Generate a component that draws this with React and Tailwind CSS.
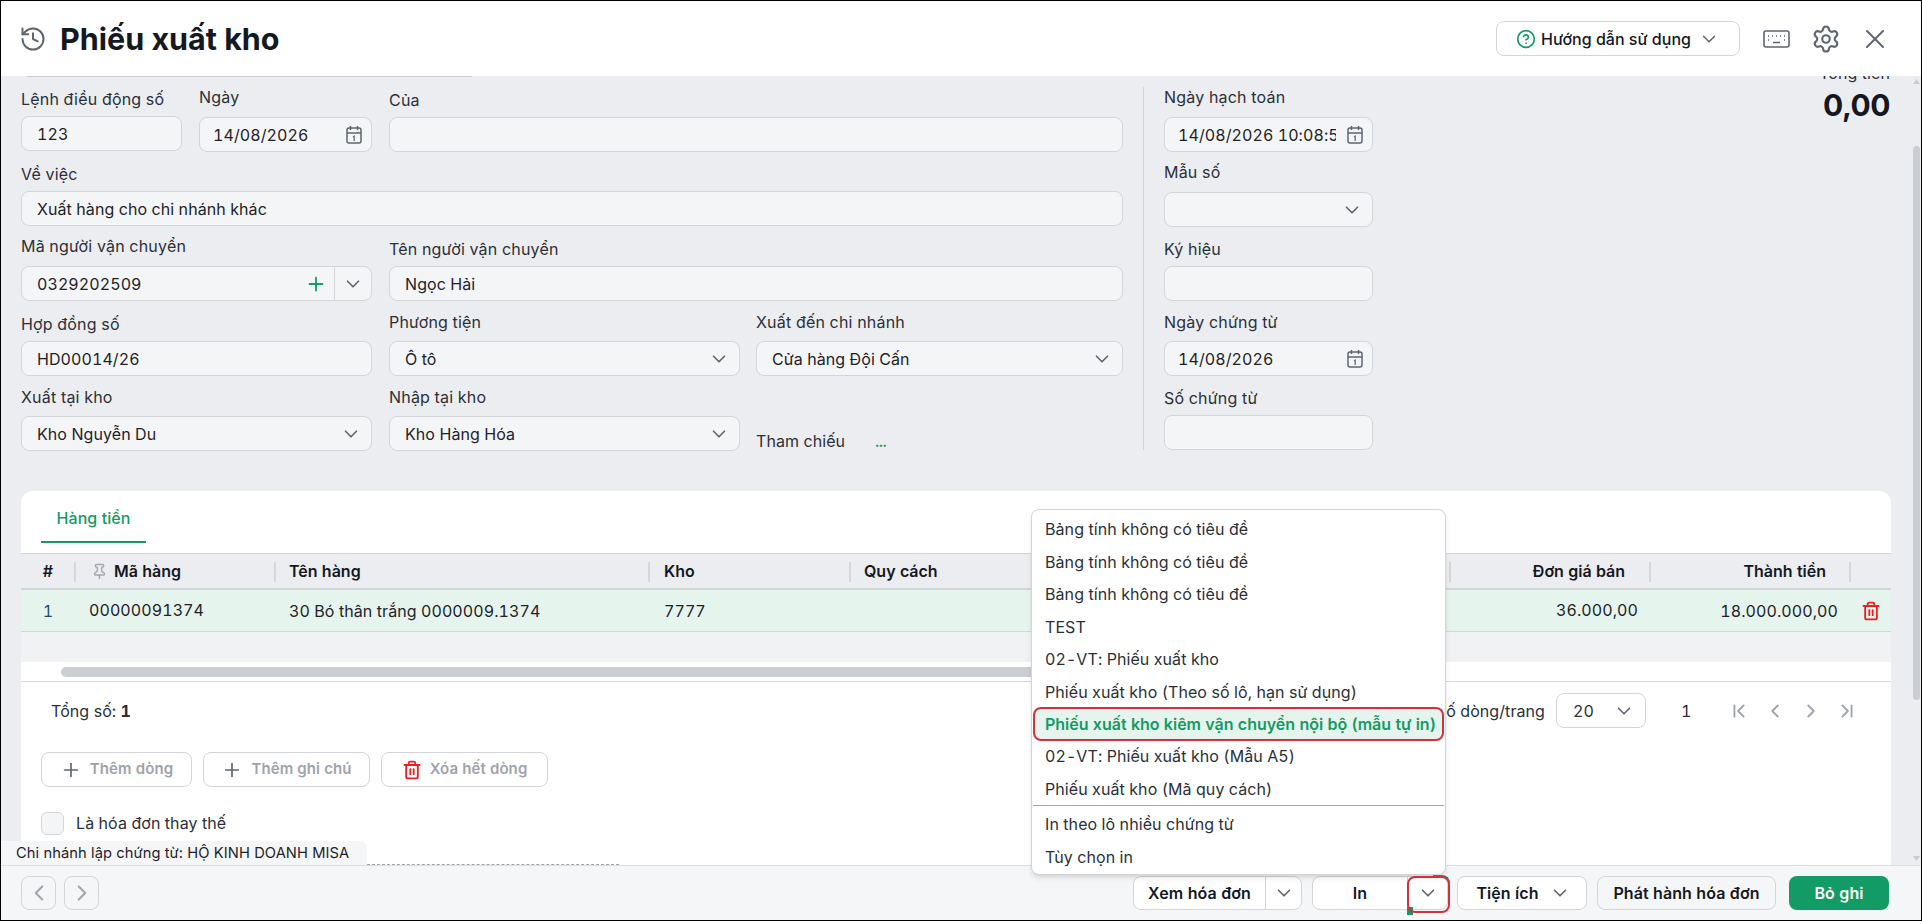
import {
  ChevronDown,
  ChevronFirst,
  ChevronLast,
  ChevronLeft,
  ChevronRight,
  CircleHelp,
  History,
  Pin,
  Plus,
  Settings,
  Trash2,
  X,
} from 'lucide-react';

const menuItems = [
  'Bảng tính không có tiêu đề',
  'Bảng tính không có tiêu đề',
  'Bảng tính không có tiêu đề',
  'TEST',
  '02-VT: Phiếu xuất kho',
  'Phiếu xuất kho (Theo số lô, hạn sử dụng)',
  'Phiếu xuất kho kiêm vận chuyển nội bộ (mẫu tự in)',
  '02-VT: Phiếu xuất kho (Mẫu A5)',
  'Phiếu xuất kho (Mã quy cách)',
];

const inputBox =
  'h-[35px] rounded-lg border border-[#d3d5d9] bg-[#f4f5f6] flex items-center text-[16px] text-[#1f2329]';

function CalendarIcon() {
  return (
    <svg width="16" height="18" viewBox="0 0 16 18" fill="none" stroke="#5f6570" strokeWidth="1.5" className="shrink-0">
      <rect x="1" y="2" width="14" height="15" rx="2" />
      <path d="M1 7h14M4.5 0v4M11.5 0v4" />
      <path d="M7 11l1.2-.8v4.8" strokeWidth="1.2" />
    </svg>
  );
}

function KeyboardIcon() {
  return (
    <svg width="27" height="18" viewBox="0 0 27 18" fill="none" stroke="#5f6570" className="shrink-0">
      <rect x="1" y="1" width="25" height="16" rx="2" strokeWidth="1.6" />
      <path d="M5 6h1M9 6h1M13 6h1M17 6h1M21 6h1M5 10h1M21 10h1M10 12.5h7" strokeWidth="1.5" />
    </svg>
  );
}

function Label({ children, gap }) {
  return <div className={`h-5 leading-5 text-[16px] tracking-[0.2px] text-[#2b3038] whitespace-nowrap ${gap}`}>{children}</div>;
}

function TextField({ label, value, gap, width, icon, pad = 'px-[15px]' }) {
  return (
    <div className={width}>
      <Label gap={gap}>{label}</Label>
      <div className={`${inputBox} ${pad} justify-between`}>
        <span className="overflow-hidden whitespace-nowrap">{value}</span>
        {icon}
      </div>
    </div>
  );
}

function SelectField({ label, value, gap, width }) {
  return (
    <TextField
      label={label}
      value={value}
      gap={gap}
      width={width}
      pad="pl-[15px] pr-[9px]"
      icon={<ChevronDown size={22} color="#5f6570" strokeWidth={1.8} className="shrink-0" />}
    />
  );
}

function FooterButton({ children, className }) {
  return (
    <div className={`h-[34px] flex items-center justify-center rounded-lg border border-[#d3d5d9] text-[16px] font-semibold text-[#14181f] ${className}`}>
      {children}
    </div>
  );
}

function AddButton({ icon, children, width }) {
  return (
    <div className={`h-[35px] ${width} rounded-lg border border-[#d3d5d9] flex items-center justify-center gap-[8px] text-[15px] font-semibold text-[#9ea3ab]`}>
      {icon}
      {children}
    </div>
  );
}

function HeadCell({ width, align = 'justify-start', children, divider = true }) {
  return (
    <div className={`${width} h-full flex items-center ${align} relative`}>
      {children}
      {divider && <div className="absolute -right-px top-[8px] h-[20px] w-[2px] bg-[#d5d7db]" />}
    </div>
  );
}

export default function App() {
  return (
    <div className="relative w-[1922px] h-[921px] overflow-hidden border border-black bg-white flex flex-col font-[Inter,sans-serif] tabular-nums tracking-[0.08px]">
      {/* Header */}
      <header className="h-[75px] shrink-0 flex items-center bg-white pl-[18px] pr-[30px]">
        <History size={28} color="#5f6570" strokeWidth={1.7} />
        <h1 className="ml-[13px] text-[30.5px] font-bold text-[#14181f] tracking-normal normal-nums">Phiếu xuất kho</h1>
        <div className="ml-auto flex items-center">
          <div className="w-[244px] h-[35px] rounded-lg border border-[#d3d5d9] flex items-center justify-center gap-[5px] text-[16px] font-medium text-[#14181f] tracking-normal">
            <CircleHelp size={20} color="#129b65" strokeWidth={2} />
            Hướng dẫn sử dụng
            <ChevronDown size={22} color="#5f6570" strokeWidth={1.6} className="ml-[2px]" />
          </div>
          <div className="ml-[23px]"><KeyboardIcon /></div>
          <Settings size={30} color="#5f6570" strokeWidth={1.7} className="ml-[21px]" />
          <X size={32} color="#5f6570" strokeWidth={1.5} className="ml-[18px]" />
        </div>
      </header>

      {/* Body */}
      <main className="relative flex-1 min-h-0 flex bg-[#ecedf0] overflow-hidden">
        <div className="w-[1890px] shrink-0 flex flex-col pl-[20px]">
          <div className="flex h-[415px] shrink-0">
            {/* Left form */}
            <div className="w-[1102px] shrink-0 flex flex-col">
              <div className="h-px w-[445px] ml-[6px] bg-[#c9ccd1]" />
              <div className="h-[75px] flex items-end gap-[17px]">
                <TextField label="Lệnh điều động số" value="123" gap="mb-[7px]" width="w-[161px] -translate-y-px" />
                <TextField label="Ngày" value="14/08/2026" gap="mb-[10px]" width="w-[173px]" pad="pl-[13px] pr-[9px]" icon={<CalendarIcon />} />
                <TextField label="Của" value="" gap="mb-[7px]" width="w-[734px]" />
              </div>
              <div className="h-[74px] flex items-end">
                <TextField label="Về việc" value="Xuất hàng cho chi nhánh khác" gap="mb-[7px]" width="w-full" />
              </div>
              <div className="h-[75px] flex items-end gap-[17px]">
                <div className="w-[351px]">
                  <Label gap="mb-[10px]">Mã người vận chuyển</Label>
                  <div className={`${inputBox} pl-[15px]`}>
                    <span className="flex-1">0329202509</span>
                    <Plus size={22} color="#129b65" strokeWidth={2} className="mr-[7px]" />
                    <div className="w-[37px] h-full border-l border-[#d3d5d9] flex items-center justify-center">
                      <ChevronDown size={22} color="#5f6570" strokeWidth={1.8} />
                    </div>
                  </div>
                </div>
                <TextField label="Tên người vận chuyển" value="Ngọc Hải" gap="mb-[7px]" width="flex-1" />
              </div>
              <div className="h-[75px] flex items-end gap-[16px]">
                <TextField label="Hợp đồng số" value="HD00014/26" gap="mb-[7px]" width="w-[351px] mr-px" />
                <SelectField label="Phương tiện" value="Ô tô" gap="mb-[9px]" width="w-[351px]" />
                <SelectField label="Xuất đến chi nhánh" value="Cửa hàng Đội Cấn" gap="mb-[9px]" width="w-[367px]" />
              </div>
              <div className="h-[75px] flex items-end gap-[16px]">
                <SelectField label="Xuất tại kho" value="Kho Nguyễn Du" gap="mb-[9px]" width="w-[351px] mr-px" />
                <SelectField label="Nhập tại kho" value="Kho Hàng Hóa" gap="mb-[9px]" width="w-[351px]" />
                <div className="flex items-baseline h-5 text-[16px] leading-5 text-[#2b3038]">
                  Tham chiếu
                  <span className="ml-[30px] text-[14px] font-bold text-[#129b65]">...</span>
                </div>
              </div>
            </div>

            <div className="w-px self-stretch mt-[11px] mb-[41px] ml-[20px] bg-[#d3d5d9]" />

            {/* Right form */}
            <div className="w-[209px] ml-[20px] shrink-0 flex flex-col">
              <div className="h-px" />
              <div className="h-[75px] flex items-end">
                <TextField label="Ngày hạch toán" value="14/08/2026 10:08:57" gap="mb-[10px]" width="w-full" pad="pl-[13px] pr-[9px] gap-[11px]" icon={<CalendarIcon />} />
              </div>
              <div className="h-[75px] flex items-end">
                <SelectField label="Mẫu số" value="" gap="mb-[10px]" width="w-full" />
              </div>
              <div className="h-[74px] flex items-end">
                <TextField label="Ký hiệu" value="" gap="mb-[7px]" width="w-full" />
              </div>
              <div className="h-[75px] flex items-end">
                <TextField label="Ngày chứng từ" value="14/08/2026" gap="mb-[9px]" width="w-full" pad="pl-[13px] pr-[9px]" icon={<CalendarIcon />} />
              </div>
              <div className="h-[74px] flex items-end">
                <TextField label="Số chứng từ" value="" gap="mb-[7px]" width="w-full" />
              </div>
            </div>

            {/* Total */}
            <div className="flex-1 flex flex-col items-end pr-px -mt-[13px]">
              <div className="h-5 leading-5 text-[16px] text-[#2b3038]">Tổng tiền</div>
              <div className="mt-[5px] text-[30px] leading-[34px] font-bold text-[#14181f] normal-nums tracking-[-0.5px]">0,00</div>
            </div>
          </div>

          {/* Detail card */}
          <section className="w-[1870px] flex-1 rounded-t-xl bg-white flex flex-col">
            <div className="h-[62px] shrink-0 pl-[20px]">
              <div className="w-[105px] h-[52px] border-b-2 border-[#129b65] pt-[17px] text-center text-[16px] leading-5 font-medium text-[#129b65]">
                Hàng tiền
              </div>
            </div>

            <div className="h-[37px] shrink-0 flex items-center border-t border-b-2 border-[#d3d5d9] bg-[#ecedf0] text-[16px] font-semibold text-[#14181f] tracking-normal">
              <HeadCell width="w-[54px]" align="justify-center">#</HeadCell>
              <HeadCell width="w-[200px]">
                <Pin size={17} color="#a3a7ae" className="ml-[16px] mr-[6px]" />
                Mã hàng
              </HeadCell>
              <HeadCell width="w-[374px]"><span className="ml-[14px]">Tên hàng</span></HeadCell>
              <HeadCell width="w-[201px]"><span className="ml-[15px]">Kho</span></HeadCell>
              <HeadCell width="w-[600px]"><span className="ml-[14px]">Quy cách</span></HeadCell>
              <HeadCell width="w-[200px]" align="justify-end"><span className="mr-[25px]">Đơn giá bán</span></HeadCell>
              <HeadCell width="w-[200px]" align="justify-end"><span className="mr-[24px]">Thành tiền</span></HeadCell>
              <HeadCell width="w-[41px]" divider={false} />
            </div>

            <div className="h-[42px] shrink-0 flex items-center border-b border-[#d3d5d9] bg-[#e6f4ee] text-[16px] text-[#1f2329]">
              <div className="w-[54px] text-center text-[#1f4f7a]">1</div>
              <div className="w-[200px] pl-[14px] -translate-y-[1px]">00000091374</div>
              <div className="w-[374px] pl-[14px]">30 Bó thân trắng 0000009.1374</div>
              <div className="w-[201px] pl-[15px]">7777</div>
              <div className="w-[600px]" />
              <div className="w-[200px] pr-[12px] text-right -translate-y-[1px]">36.000,00</div>
              <div className="w-[200px] pr-[12px] text-right">18.000.000,00</div>
              <div className="w-[41px] flex justify-center">
                <Trash2 size={20} color="#f01d1d" strokeWidth={2.2} />
              </div>
            </div>

            <div className="h-[30px] shrink-0 bg-[#f1f2f4]" />
            <div className="h-[20px] shrink-0 pt-[5px] pl-[40px] border-b border-[#d5d7db]">
              <div className="w-[1100px] h-[10px] rounded-full bg-[#cbced2]" />
            </div>

            <div className="flex items-center h-[35px] mt-[11px] shrink-0 text-[16px] text-[#2b3038]">
              <div className="ml-[30px]">Tổng số: <span className="font-bold">1</span></div>
              <div className="ml-auto flex items-center">
                <span>Số dòng/trang</span>
                <div className="ml-[11px] w-[90px] h-[35px] rounded-lg border border-[#d3d5d9] bg-white flex items-center justify-between pl-[16px] pr-[10px]">
                  20
                  <ChevronDown size={22} color="#5f6570" strokeWidth={1.8} />
                </div>
                <span className="ml-[35px] w-[10px]">1</span>
                <div className="ml-[37px] flex items-center gap-[14px] mr-[33px]">
                  <ChevronFirst size={22} color="#9ea3ab" />
                  <ChevronLeft size={22} color="#9ea3ab" />
                  <ChevronRight size={22} color="#9ea3ab" />
                  <ChevronLast size={22} color="#9ea3ab" />
                </div>
              </div>
            </div>

            <div className="flex gap-[11px] pl-[20px] mt-[24px] shrink-0">
              <AddButton width="w-[151px]" icon={<Plus size={22} color="#5f6570" strokeWidth={1.8} />}>Thêm dòng</AddButton>
              <AddButton width="w-[167px]" icon={<Plus size={22} color="#5f6570" strokeWidth={1.8} />}>Thêm ghi chú</AddButton>
              <AddButton width="w-[167px]" icon={<Trash2 size={20} color="#f01d1d" strokeWidth={2.2} />}>Xóa hết dòng</AddButton>
            </div>

            <div className="flex items-center pl-[20px] mt-[24px] shrink-0">
              <div className="w-[23px] h-[23px] rounded-md border border-[#d3d5d9] bg-[#f4f5f6]" />
              <span className="ml-[12px] text-[16px] text-[#2b3038]">Là hóa đơn thay thế</span>
            </div>
          </section>
        </div>

        {/* Page scrollbar */}
        <div className="flex-1 relative">
          <svg width="7" height="5" viewBox="0 0 7 5" className="absolute left-[22px] top-[3px]"><path d="M3.5 0L7 5H0z" fill="#c9ccd1" /></svg>
          <div className="absolute left-[22px] top-[70px] w-[7px] h-[554px] rounded-full bg-[#c9ccd1]" />
          <svg width="7" height="5" viewBox="0 0 7 5" className="absolute left-[22px] bottom-[4px]"><path d="M3.5 5L7 0H0z" fill="#c9ccd1" /></svg>
        </div>

        {/* Branch tag */}
        <div className="absolute left-0 bottom-0 w-[366px] h-[24px] rounded-tr-lg bg-[#f5f6f7] pl-[15px] text-[14.7px] leading-[24px] text-[#1f2329] normal-nums">
          Chi nhánh lập chứng từ: HỘ KINH DOANH MISA
        </div>
        <div className="absolute left-[366px] bottom-0 w-[252px] border-b border-dashed border-[#9ea3ab]" />
      </main>

      {/* Footer */}
      <footer className="h-[55px] shrink-0 border-t border-[#dcdee1] bg-[#f5f6f7] flex items-center pl-[20px] pr-[32px]">
        <div className="w-[35px] h-[34px] rounded-lg border border-[#d3d5d9] flex items-center justify-center">
          <ChevronLeft size={26} color="#a3a7ae" />
        </div>
        <div className="ml-[8px] w-[35px] h-[34px] rounded-lg border border-[#d3d5d9] flex items-center justify-center">
          <ChevronRight size={26} color="#a3a7ae" />
        </div>
        <div className="ml-auto flex items-center">
          <FooterButton className="w-[169px] bg-white">
            <span className="flex-1 text-center">Xem hóa đơn</span>
            <span className="w-[36px] h-full border-l border-[#d3d5d9] flex items-center justify-center">
              <ChevronDown size={22} color="#5f6570" strokeWidth={1.8} />
            </span>
          </FooterButton>
          <FooterButton className="ml-[10px] w-[136px] bg-white">
            <span className="flex-1 text-center">In</span>
            <span className="w-[40px] h-full border-l border-[#d3d5d9] flex items-center justify-center">
              <ChevronDown size={22} color="#5f6570" strokeWidth={1.8} />
            </span>
          </FooterButton>
          <FooterButton className="ml-[9px] w-[130px] bg-white gap-[10px] pl-[3px]">
            Tiện ích
            <ChevronDown size={22} color="#5f6570" strokeWidth={1.8} />
          </FooterButton>
          <FooterButton className="ml-[10px] w-[179px] bg-[#f5f6f7]">Phát hành hóa đơn</FooterButton>
          <div className="ml-[13px] w-[100px] h-[34px] rounded-lg bg-[#129b65] flex items-center justify-center text-[16px] font-semibold text-white">
            Bỏ ghi
          </div>
        </div>
      </footer>

      {/* Print dropdown */}
      <div className="absolute left-[1030px] top-[508px] w-[415px] h-[366px] rounded-lg border border-[#d3d5d9] bg-white shadow-md text-[16px] text-[#2b3038] pt-[3px]">
        {menuItems.map((item, i) =>
          i === 6 ? (
            <div key={i} className="mx-[1px] h-[34px] -my-[1px] rounded-lg border-2 border-[#d0323c] bg-[#e6f4ee] flex items-center pl-[10px] font-semibold text-[#129b65] whitespace-nowrap tracking-normal">
              {item}
            </div>
          ) : (
            <div key={i} className="h-[32.5px] flex items-center pl-[13px]">{item}</div>
          )
        )}
        <div className="mx-[1px] mb-[2px] h-px bg-[#a3a7ae]" />
        <div className="h-[32.5px] flex items-center pl-[13px]">In theo lô nhiều chứng từ</div>
        <div className="h-[32.5px] flex items-center pl-[13px]">Tùy chọn in</div>
      </div>

      {/* Highlight round the print arrow */}
      <div className="absolute left-[1432px] top-[874px] w-[17px] h-[8px] rounded-tr-lg border-t-2 border-r-2 border-[#129b65]" />
      <div className="absolute left-[1406px] top-[906px] w-[6px] h-[8px] bg-[#129b65]" />
      <div className="absolute left-[1406px] top-[875px] w-[43px] h-[37px] rounded-lg border-2 border-[#d0323c]" />
    </div>
  );
}
